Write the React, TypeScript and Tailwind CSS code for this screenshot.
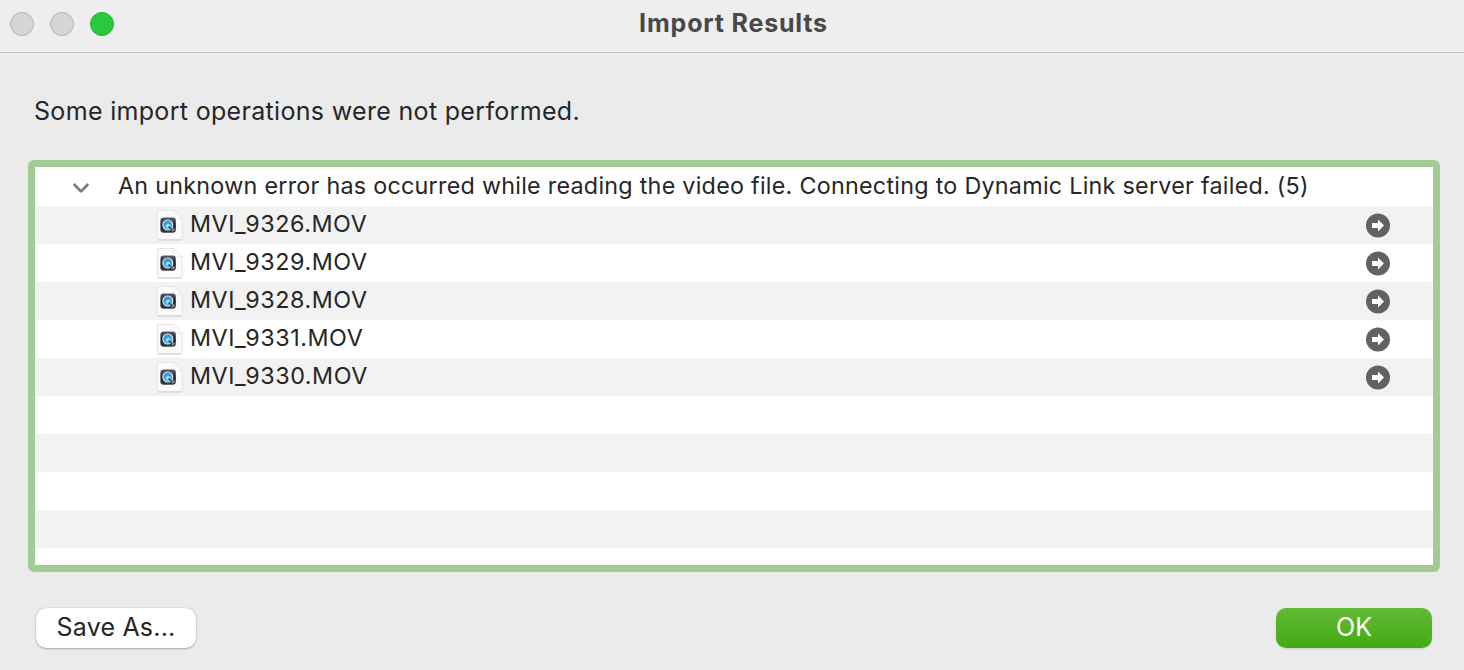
import React from "react";

const files = ["MVI_9326.MOV", "MVI_9329.MOV", "MVI_9328.MOV", "MVI_9331.MOV", "MVI_9330.MOV"];

function FileIcon() {
  return (
    <svg width="28" height="32" viewBox="0 0 28 32" className="block shrink-0">
      <defs>
        <linearGradient id="tile" x1="0" y1="0" x2="0" y2="1">
          <stop offset="0" stopColor="#5a5e64" />
          <stop offset="0.5" stopColor="#1c1f24" />
          <stop offset="1" stopColor="#3c3e42" />
        </linearGradient>
        <linearGradient id="lens" x1="0" y1="0" x2="0.3" y2="1">
          <stop offset="0" stopColor="#2a86d8" />
          <stop offset="1" stopColor="#4cc0ee" />
        </linearGradient>
      </defs>
      <path d="M2.5 1.5H19L27 9.5V29.5Q27 30.5 26 30.5H3.5Q2.5 30.5 2.5 29.5Z" fill="#fbfbfb" stroke="#e5e5e5" />
      <path d="M3 31H26.5" stroke="#cccccc" />
      <path d="M19 1.5V9.5H27Z" fill="#ffffff" stroke="#e4e4e4" strokeWidth="0.7" />
      <rect x="5.4" y="8.6" width="15.4" height="15.2" rx="3.2" fill="url(#tile)" />
      <path d="M14 17L19 21.7" stroke="#8a9298" strokeWidth="3" />
      <circle cx="12.8" cy="16" r="5" fill="url(#lens)" stroke="#dfe8ee" strokeWidth="1.1" />
      <circle cx="13.2" cy="16.8" r="1.9" fill="#b9e6f8" />
      <path d="M13.5 17.3L17.2 20.8" stroke="#34566b" strokeWidth="1.6" />
    </svg>
  );
}

function RevealIcon() {
  return (
    <svg className="ml-auto mr-[43px] h-[25px] w-6" viewBox="0 0 24 25">
      <circle cx="12" cy="12.5" r="12" fill="#626262" />
      <path d="M6 10H12V6.5L18 12.5L12 18.5V15H6Z" fill="white" />
    </svg>
  );
}

export default function App() {
  return (
    <div className="flex h-[670px] w-[1464px] flex-col overflow-hidden bg-[#ebebeb] font-[Inter,sans-serif] text-[#262626]">
      <header className="grid h-[53px] grid-cols-[1fr_auto_1fr] border-b border-[#c6c6c6] bg-[#eeeeee]">
        <div className="flex gap-4 pl-2.5 pt-3">
          <i className="size-6 rounded-full border border-[#b5b5b5] bg-[#d5d5d5]" />
          <i className="size-6 rounded-full border border-[#b5b5b5] bg-[#d5d5d5]" />
          <i className="size-6 rounded-full border border-[#24b138] bg-[#28c840]" />
        </div>
        <h1 className="pl-[3px] pt-[5px] text-[25px] font-bold leading-9 tracking-[0.82px] text-[#484848]">Import Results</h1>
      </header>
      <p className="pl-[34px] pt-[42px] text-[25px] leading-8 tracking-[0.32px]">Some import operations were not performed.</p>
      <section className="ml-7 mt-[33px] h-[412px] w-[1412px] rounded-md border-[7px] border-[#a2cc96] bg-white bg-[repeating-linear-gradient(#fff_0_38px,#f2f2f2_38px_76px)] bg-[position:0_1px] bg-no-repeat">
        <div className="flex h-[39px] items-center text-[23.3px]">
          <svg className="ml-[37px] mr-7 mt-1 size-[18px]" viewBox="0 0 18 18" fill="none">
            <path d="M2.5 4.7L9 11.4L15.5 4.7" stroke="#7b7b7b" strokeWidth="2.7" strokeLinecap="round" strokeLinejoin="round" />
          </svg>
          <span className="pb-px tracking-[0.27px]">An unknown error has occurred while reading the video file. Connecting to Dynamic Link server failed. (5)</span>
        </div>
        {files.map((name) => (
          <div key={name} className="flex h-[38px] items-center pl-[120px] text-[23.3px]">
            <FileIcon />
            <span className="ml-[7px] pb-0.5 tracking-[0.57px]">{name}</span>
            <RevealIcon />
          </div>
        ))}
      </section>
      <footer className="mt-9 flex justify-between pl-9 pr-8 text-[25px]">
        <button className="h-10 w-40 rounded-[10px] bg-white tracking-[0.2px] shadow-[0_0_1px_rgba(0,0,0,0.35),0_1px_2px_rgba(0,0,0,0.25)]">Save As...</button>
        <button className="h-10 w-[156px] rounded-[10px] bg-gradient-to-b from-[#62bb33] to-[#42aa0d] text-white shadow-[0_1px_2px_rgba(0,80,0,0.15)]">OK</button>
      </footer>
    </div>
  );
}
